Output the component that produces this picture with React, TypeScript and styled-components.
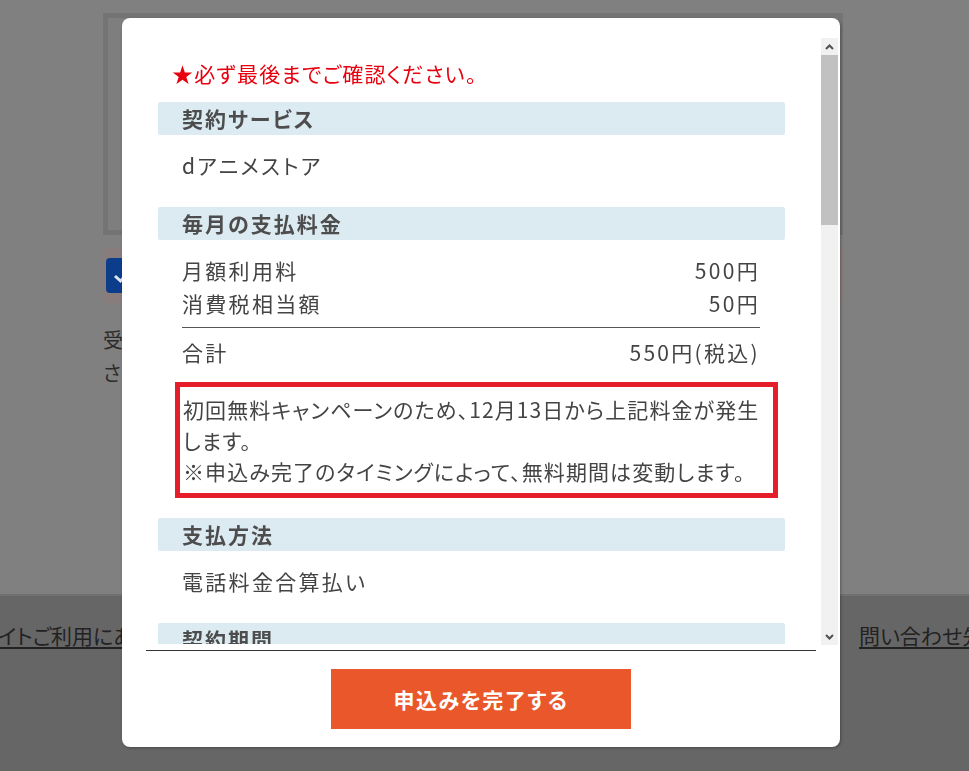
import React from "react";
import styled, { createGlobalStyle } from "styled-components";

const GlobalStyle = createGlobalStyle`
  html, body { margin: 0; padding: 0; }
  body {
    background: #808080;
    font-family: "Noto Sans CJK JP", "Noto Sans", sans-serif;
    font-feature-settings: "palt";
    overflow: hidden;
  }
`;

const Page = styled.div`
  width: 969px;
  height: 771px;
  display: flex;
  flex-direction: column;
  overflow: hidden;
`;

const Main = styled.main`
  height: 594px;
  flex: 0 0 auto;
  box-sizing: border-box;
  padding: 13px 0 0 103px;
  display: flex;
  flex-direction: column;
  align-items: flex-start;
`;

const FrameBox = styled.div`
  width: 740px;
  height: 222px;
  box-sizing: border-box;
  border: 5px solid #747474;
  background: #7e7e7e;
`;

const AgreeRow = styled.div`
  margin-top: 13px;
  width: 740px;
  height: 55px;
  box-sizing: border-box;
  padding-left: 3px;
  background: #887c7c;
  display: flex;
  align-items: center;
`;

const CheckBox = styled.div`
  width: 34px;
  height: 35px;
  border-radius: 4px;
  background: #0c3d8b;
  display: flex;
  align-items: center;
  justify-content: center;
`;

const Notice = styled.p`
  margin: 20px 0 0;
  width: 740px;
  font-size: 20px;
  line-height: 33px;
  color: #2b2b2b;
`;

const Footer = styled.footer`
  flex: 1;
  background: #666;
  border-top: 2px solid #707070;
  padding-top: 23px;
`;

const FooterNav = styled.nav`
  display: flex;
  align-items: center;
  margin-left: -22px;
`;

const FooterLink = styled.a<{ $basis?: number }>`
  flex: 0 0 ${(p) => (p.$basis ? `${p.$basis}px` : "auto")};
  font-size: 21px;
  line-height: 33px;
  color: #222;
  text-decoration: underline;
  text-underline-offset: 3px;
  white-space: nowrap;
  padding-left: ${(p) => (p.$basis ? "0" : "11px")};
`;

const FooterSep = styled.span`
  width: 1px;
  height: 33px;
  background: #222;
`;

const Modal = styled.div`
  position: fixed;
  left: 122px;
  top: 18px;
  width: 718px;
  height: 729px;
  box-sizing: border-box;
  background: #fff;
  border-radius: 8px;
  box-shadow: 1px 1px 3px rgba(0, 0, 0, 0.3);
  padding: 20px 2px 18px 24px;
  display: flex;
  flex-direction: column;
`;

const ScrollRow = styled.div`
  display: flex;
  gap: 5px;
  height: 607px;
`;

const Viewport = styled.div`
  width: 670px;
  height: 606px;
  overflow: hidden;
`;

const Content = styled.div`
  padding: 20px 31px 0 12px;
  color: #444;
  font-size: 21px;
  letter-spacing: 2.3px;
`;

const Caution = styled.p`
  margin: 0 0 14px;
  padding-left: 14px;
  color: #e8000e;
  font-size: 21px;
  line-height: 30px;
  letter-spacing: 1.2px;
`;

const SectionHead = styled.h2`
  margin: 0;
  height: 33px;
  line-height: 33px;
  padding-left: 24px;
  background: #dcebf1;
  border-radius: 2px;
  font-size: 21px;
  font-weight: 700;
  color: #4d4d4d;
  letter-spacing: 2px;
  overflow: hidden;
`;

const SectionBody = styled.div<{ $top?: number; $bottom?: number }>`
  padding: ${(p) => p.$top ?? 15}px 25px ${(p) => p.$bottom ?? 27}px 24px;
  line-height: 30px;
`;

const Row = styled.div`
  display: flex;
  justify-content: space-between;
  line-height: 33px;
`;

const RowRule = styled.hr`
  margin: 7px 0 8px;
  border: 0;
  border-top: 1px solid #555;
  height: 0;
`;

const AlertBox = styled.div`
  margin: 13px -18px 0 -7px;
  border: 5px solid #e61e2a;
  padding: 7px 2px 6px 3px;
  line-height: 31px;
  color: #444;
  letter-spacing: 1.1px;
  white-space: nowrap;
`;

const Scrollbar = styled.div`
  width: 17px;
  display: flex;
  flex-direction: column;
  background: #f1f1f1;
`;

const ArrowBtn = styled.div`
  height: 17px;
  flex: 0 0 17px;
  display: flex;
  align-items: center;
  justify-content: center;
`;

const Thumb = styled.div`
  height: 170px;
  background: #c1c1c1;
`;

const Track = styled.div`
  flex: 1;
`;

const Divider = styled.hr`
  margin: 5px 0 0;
  width: 670px;
  border: 0;
  border-top: 1px solid #333;
  height: 0;
`;

const ButtonRow = styled.div`
  margin: 18px -2px 0 -24px;
  display: flex;
  justify-content: center;
`;

const SubmitButton = styled.button`
  width: 300px;
  height: 60px;
  border: 0;
  border-radius: 0;
  background: #ea572a;
  color: #fff;
  font-family: "Noto Sans CJK JP", sans-serif;
  font-feature-settings: "palt";
  font-size: 21px;
  font-weight: 700;
  letter-spacing: 1.5px;
  cursor: pointer;
`;

const Chevron = ({ up }: { up?: boolean }) => (
  <svg width="9" height="6" viewBox="0 0 9 6">
    <path
      d={up ? "M1 5 L4.5 1.5 L8 5" : "M1 1 L4.5 4.5 L8 1"}
      fill="none"
      stroke="#505050"
      strokeWidth="2"
    />
  </svg>
);

export default function App() {
  return (
    <>
      <GlobalStyle />
      <Page>
        <Main>
          <FrameBox />
          <AgreeRow>
            <CheckBox>
              <svg width="22" height="18" viewBox="0 0 22 18">
                <path d="M3 9 L8.5 14 L19 3" fill="none" stroke="#dfe6f1" strokeWidth="3" />
              </svg>
            </CheckBox>
          </AgreeRow>
          <Notice>
            受付完了後、ご登録のメールアドレスに確認メールが送信
            <br />
            されますので、内容をご確認ください。
          </Notice>
        </Main>
        <Footer>
          <FooterNav>
            <FooterLink $basis={870}>サイトご利用にあたって</FooterLink>
            <FooterSep />
            <FooterLink>問い合わせ先</FooterLink>
          </FooterNav>
        </Footer>
      </Page>

      <Modal role="dialog">
        <ScrollRow>
          <Viewport>
            <Content>
              <Caution>★必ず最後までご確認ください。</Caution>

              <SectionHead>契約サービス</SectionHead>
              <SectionBody>dアニメストア</SectionBody>

              <SectionHead>毎月の支払料金</SectionHead>
              <SectionBody $top={14} $bottom={20}>
                <Row>
                  <span>月額利用料</span>
                  <span>500円</span>
                </Row>
                <Row>
                  <span>消費税相当額</span>
                  <span>50円</span>
                </Row>
                <RowRule />
                <Row>
                  <span>合計</span>
                  <span>550円(税込)</span>
                </Row>
                <AlertBox>
                  初回無料キャンペーンのため、12月13日から上記料金が発生
                  <br />
                  します。
                  <br />
                  ※申込み完了のタイミングによって、無料期間は変動します。
                </AlertBox>
              </SectionBody>

              <SectionHead>支払方法</SectionHead>
              <SectionBody>電話料金合算払い</SectionBody>

              <SectionHead>契約期間</SectionHead>
              <SectionBody>契約期間の定めはありません</SectionBody>
            </Content>
          </Viewport>
          <Scrollbar>
            <ArrowBtn>
              <Chevron up />
            </ArrowBtn>
            <Thumb />
            <Track />
            <ArrowBtn>
              <Chevron />
            </ArrowBtn>
          </Scrollbar>
        </ScrollRow>
        <Divider />
        <ButtonRow>
          <SubmitButton type="button">申込みを完了する</SubmitButton>
        </ButtonRow>
      </Modal>
    </>
  );
}
